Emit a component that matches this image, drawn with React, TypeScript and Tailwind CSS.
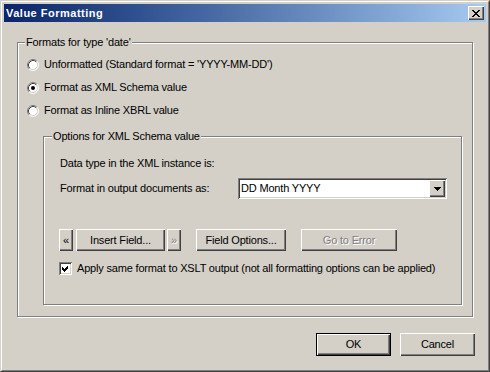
import React from "react";

const raised =
  "shadow-[inset_1px_1px_0_#ffffff,inset_-1px_-1px_0_#404040,inset_-2px_-2px_0_#808080]";
const sunken =
  "shadow-[inset_1px_1px_0_#808080,inset_-1px_-1px_0_#ffffff,inset_2px_2px_0_#404040,inset_-2px_-2px_0_#d4d0c8]";

function Radio({ checked }: { checked?: boolean }) {
  return (
    <svg width="12" height="12" viewBox="0 0 12 12" className="shrink-0">
      <circle cx="6" cy="6" r="5" fill="#ffffff" />
      <path d="M2.11 9.89 A5.5 5.5 0 0 1 9.89 2.11" fill="none" stroke="#808080" strokeWidth="1" />
      <path d="M9.89 2.11 A5.5 5.5 0 0 1 2.11 9.89" fill="none" stroke="#ffffff" strokeWidth="1" />
      <path d="M2.82 9.18 A4.5 4.5 0 0 1 9.18 2.82" fill="none" stroke="#404040" strokeWidth="1" />
      <path d="M9.18 2.82 A4.5 4.5 0 0 1 2.82 9.18" fill="none" stroke="#d4d0c8" strokeWidth="1" />
      {checked && <circle cx="6" cy="6" r="2" fill="#000000" />}
    </svg>
  );
}

function Checkbox() {
  return (
    <div className={`w-[13px] h-[13px] bg-white shrink-0 ${sunken} flex items-center justify-center`}>
      <svg width="13" height="13" viewBox="0 0 13 13" shapeRendering="crispEdges">
        <polygon points="3,5 5,7 9,3 9,6 5,10 3,8" fill="#000000" />
      </svg>
    </div>
  );
}

function Btn({
  children,
  w,
  disabled,
  def,
}: {
  children: React.ReactNode;
  w: string;
  disabled?: boolean;
  def?: boolean;
}) {
  return (
    <div
      className={`${w} h-full bg-[#d4d0c8] flex items-center justify-center shrink-0 ${
        def ? "border border-black" : ""
      } ${raised}`}
    >
      <span
        className={
          disabled ? "text-[#808080] [text-shadow:1px_1px_0_#ffffff]" : "text-black"
        }
      >
        {children}
      </span>
    </div>
  );
}

export default function App() {
  return (
    <div className="w-[490px] h-[372px] bg-[#d4d0c8] font-['Liberation_Sans',Arial,sans-serif] text-[11px] leading-[13px] tracking-[-0.18px] text-black border border-t-[#d4d0c8] border-l-[#d4d0c8] border-r-[#404040] border-b-[#404040]">
      <div className="h-full border border-t-white border-l-white border-r-[#808080] border-b-[#808080] p-[2px] flex flex-col">
        {/* Title bar */}
        <div className="h-[18px] shrink-0 flex items-center bg-linear-to-r from-[#0a246a] to-[#a6caf0] pl-[2px] pr-[2px]">
          <span className="flex-1 text-white font-bold text-[11px] tracking-[0.5px]">Value Formatting</span>
          <div className={`w-[16px] h-[14px] bg-[#d4d0c8] ${raised} flex items-center justify-center`}>
            <svg width="8" height="7" viewBox="0 0 8 7" shapeRendering="crispEdges">
              <path
                d="M0 0h2v1h-2zM6 0h2v1h-2zM1 1h2v1h-2zM5 1h2v1h-2zM2 2h4v1h-4zM3 3h2v1h-2zM2 4h4v1h-4zM1 5h2v1h-2zM5 5h2v1h-2zM0 6h2v1h-2zM6 6h2v1h-2z"
                fill="#000000"
              />
            </svg>
          </div>
        </div>

        {/* Body */}
        <div className="flex-1 flex flex-col">
          {/* Outer group */}
          <div className="relative mt-[20px] ml-[13px] w-[456px] h-[275px] border border-[#808080] shadow-[inset_1px_1px_0_#ffffff,1px_1px_0_#ffffff]">
            <span className="absolute left-[7px] top-[-7px] px-[1px] bg-[#d4d0c8] leading-[13px] whitespace-nowrap">
              Formats for type 'date'
            </span>
            <div className="pt-[10px] pl-[9px] flex flex-col">
              <div className="h-[23px] flex items-center gap-[5px]">
                <Radio />
                <span>Unformatted (Standard format = 'YYYY-MM-DD')</span>
              </div>
              <div className="h-[23px] flex items-center gap-[5px]">
                <Radio checked />
                <span>Format as XML Schema value</span>
              </div>
              <div className="h-[23px] flex items-center gap-[5px]">
                <Radio />
                <span>Format as Inline XBRL value</span>
              </div>
            </div>

            {/* Inner group */}
            <div className="relative mt-[14px] ml-[25px] w-[419px] h-[169px] border border-[#808080] shadow-[inset_1px_1px_0_#ffffff,1px_1px_0_#ffffff]">
              <span className="absolute left-[8px] top-[-7px] px-[1px] bg-[#d4d0c8] leading-[13px] whitespace-nowrap">
                Options for XML Schema value
              </span>
              <div className="pt-[20px] pl-[16px] flex flex-col">
                <div className="h-[13px] flex items-center">Data type in the XML instance is:</div>
                <div className="mt-[8px] h-[21px] flex items-center">
                  <span className="w-[178px] shrink-0">Format in output documents as:</span>
                  <div className={`w-[209px] h-[21px] bg-white ${sunken} flex items-center p-[2px]`}>
                    <span className="flex-1 pl-[1px]">DD Month YYYY</span>
                    <div className={`w-[16px] h-[17px] bg-[#d4d0c8] ${raised} flex items-center justify-center`}>
                      <svg width="7" height="4" viewBox="0 0 7 4" shapeRendering="crispEdges">
                        <path d="M0 0h7v1h-7zM1 1h5v1h-5zM2 2h3v1h-3zM3 3h1v1h-1z" fill="#000000" />
                      </svg>
                    </div>
                  </div>
                </div>
                <div className="mt-[30px] ml-[-1px] h-[22px] flex">
                  <Btn w="w-[14px]">«</Btn>
                  <div className="w-[3px]" />
                  <Btn w="w-[89px]">Insert Field...</Btn>
                  <div className="w-[2px]" />
                  <Btn w="w-[14px]" disabled>»</Btn>
                  <div className="w-[15px]" />
                  <Btn w="w-[90px]">Field Options...</Btn>
                  <div className="w-[15px]" />
                  <Btn w="w-[96px]" disabled>Go to Error</Btn>
                </div>
                <div className="mt-[11px] ml-[-1px] h-[13px] flex items-center gap-[5px]">
                  <Checkbox />
                  <span className="whitespace-nowrap">
                    Apply same format to XSLT output (not all formatting options can be applied)
                  </span>
                </div>
              </div>
            </div>
          </div>

          {/* Bottom buttons */}
          <div className="mt-[16px] h-[23px] flex justify-end gap-[9px] pr-[11px]">
            <Btn w="w-[75px]" def>OK</Btn>
            <Btn w="w-[75px]">Cancel</Btn>
          </div>
        </div>
      </div>
    </div>
  );
}
